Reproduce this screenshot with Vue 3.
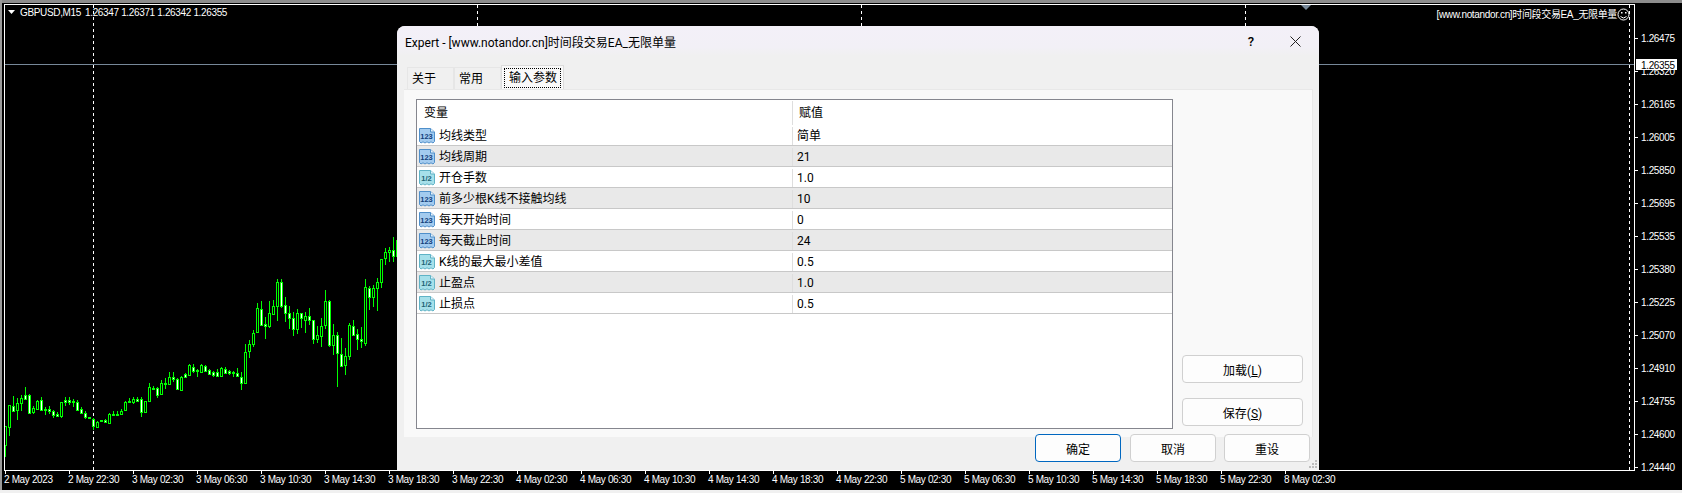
<template>
  <div class="terminal">
    <svg class="chart" width="1682" height="493" viewBox="0 0 1682 493">
      <rect x="0" y="0" width="1682" height="3" fill="#8c8c8c" />
      <rect x="0" y="0" width="2" height="493" fill="#9a9a9a" />
      <rect x="0" y="490" width="1682" height="3" fill="#f0f0f0" />

      <g shape-rendering="crispEdges">
        <line v-for="x in sessions" :key="x" :x1="x + 0.5" y1="5" :x2="x + 0.5" y2="470" stroke="#fff" stroke-dasharray="3 3" />
        <line x1="5" y1="64.5" x2="1634" y2="64.5" stroke="#778899" />

        <g v-for="c in candles" :key="c.x">
          <line :x1="c.x + 0.5" :y1="c.high" :x2="c.x + 0.5" :y2="c.low" stroke="#00ff00" />
          <rect :x="c.x - 0.5" :y="c.top + 0.5" width="2" :height="c.height" stroke="#00ff00" :fill="c.white ? '#fff' : '#000'" />
        </g>

        <line x1="4.5" y1="4" x2="4.5" y2="471" stroke="#fff" />
        <line x1="4" y1="4.5" x2="1635" y2="4.5" stroke="#fff" />
        <line x1="4" y1="470.5" x2="1635" y2="470.5" stroke="#fff" />
        <line x1="1634.5" y1="4" x2="1634.5" y2="471" stroke="#fff" />

        <line v-for="p in prices" :key="p.label" x1="1635" :y1="p.y + 0.5" x2="1638" :y2="p.y + 0.5" stroke="#fff" />
        <line v-for="d in dates" :key="d.x" :x1="d.x + 0.5" y1="471" :x2="d.x + 0.5" y2="474" stroke="#fff" />
      </g>

      <polygon points="8,10 15,10 11.5,14" fill="#fff" />
      <polygon points="1301,5 1311,5 1306,10" fill="#778899" />

      <text class="axis" x="20" y="16">GBPUSD,M15</text>
      <text class="axis" x="85" y="16">1.26347 1.26371 1.26342 1.26355</text>
      <text class="axis" x="1617" y="18" text-anchor="end">[www.notandor.cn]时间段交易EA_无限单量</text>
      <g fill="none" stroke="#fff">
        <circle cx="1623.5" cy="14.5" r="5.5" />
        <path d="M1620.5 16.5q3 3 6 0" />
      </g>
      <rect x="1621" y="12" width="1.5" height="1.5" fill="#fff" />
      <rect x="1625" y="12" width="1.5" height="1.5" fill="#fff" />

      <text v-for="p in prices" :key="p.label" class="axis" x="1641" :y="p.y + 4">{{ p.label }}</text>
      <rect x="1636" y="59" width="41" height="11" fill="#fff" />
      <text class="axis current" x="1641" y="69">1.26355</text>

      <text v-for="d in dates" :key="d.label" class="axis" :x="d.x - 1" y="483">{{ d.label }}</text>
    </svg>

    <div class="dialog">
      <div class="titlebar">
        <span class="title">Expert - [www.notandor.cn]时间段交易EA_无限单量</span>
        <span class="help">?</span>
        <svg class="close" width="11" height="11" viewBox="0 0 11 11">
          <path d="M0.5 0.5L10.5 10.5M10.5 0.5L0.5 10.5" stroke="#222" fill="none" />
        </svg>
      </div>

      <div class="tabs">
        <div class="tab">关于</div>
        <div class="tab">常用</div>
        <div class="tab active"><span class="focus">输入参数</span></div>
      </div>

      <div class="panel">
        <div class="grid">
          <div class="row head">
            <div class="name">变量</div>
            <div class="value">赋值</div>
          </div>
          <div v-for="(row, i) in rows" :key="row.name" class="row item" :class="{ odd: i % 2 === 1 }">
            <div class="name">
              <svg class="type-icon" width="16" height="16" viewBox="0 0 16 16">
                <path
                  d="M0.5 0.5H11.5L15.5 4V13.5L14 15L12 13.8L10 15L8 13.8L6 15L4 13.8L2 15L0.5 13.5Z"
                  :fill="row.dbl ? '#a6e0ea' : '#a3cbef'"
                  :stroke="row.dbl ? '#5fb3c6' : '#4f8fca'"
                />
                <path d="M11.5 0.5V4H15.5" fill="#e6f3fb" :stroke="row.dbl ? '#5fb3c6' : '#4f8fca'" />
                <text class="type-text" x="7.5" y="11" text-anchor="middle" :fill="row.dbl ? '#1d6275' : '#123f7c'">{{ row.dbl ? '1/2' : '123' }}</text>
              </svg>
              <span>{{ row.name }}</span>
            </div>
            <div class="value">{{ row.value }}</div>
          </div>
        </div>

        <div class="side">
          <button class="btn side-btn">加载(<u>L</u>)</button>
          <button class="btn side-btn">保存(<u>S</u>)</button>
        </div>
      </div>

      <div class="footer">
        <button class="btn foot-btn primary">确定</button>
        <button class="btn foot-btn">取消</button>
        <button class="btn foot-btn">重设</button>
      </div>
      <svg class="grip" width="9" height="9" viewBox="0 0 9 9">
        <g fill="#bdbdbd">
          <rect x="6" y="0" width="2" height="2" />
          <rect x="3" y="3" width="2" height="2" />
          <rect x="6" y="3" width="2" height="2" />
          <rect x="0" y="6" width="2" height="2" />
          <rect x="3" y="6" width="2" height="2" />
          <rect x="6" y="6" width="2" height="2" />
        </g>
      </svg>
    </div>
  </div>
</template>

<script setup>
// candle rows: high, low, body top, body bottom, white body
// numbers were read off 3x crops, so each part has its own base y
const partA = [
  [257, 352, 257, 315, 0], [195, 287, 195, 260, 0], [168, 212, 198, 212, 1], [175, 240, 190, 212, 0],
  [165, 212, 175, 190, 0], [141, 180, 165, 177, 1], [163, 222, 165, 218, 1], [197, 222, 205, 218, 0],
  [180, 210, 183, 207, 0], [172, 212, 181, 212, 1], [200, 226, 208, 210, 1], [197, 222, 207, 214, 1],
  [210, 234, 212, 224, 1], [215, 232, 222, 228, 1], [185, 234, 187, 228, 0], [170, 198, 181, 187, 1],
  [172, 196, 181, 187, 1], [177, 200, 183, 187, 1], [181, 212, 186, 210, 1], [200, 222, 207, 220, 1],
  [214, 236, 220, 232, 1], [232, 233, 232, 233, 1], [235, 270, 238, 260, 1], [243, 261, 245, 260, 0],
  [241, 243, 241, 243, 1], [238, 250, 241, 248, 1], [220, 252, 222, 248, 0], [212, 225, 222, 223, 1],
  [212, 226, 221, 222, 1], [208, 222, 212, 221, 0], [182, 214, 187, 212, 0], [174, 190, 183, 187, 1],
  [172, 192, 178, 188, 0], [172, 187, 176, 183, 1], [170, 232, 178, 218, 1], [182, 218, 184, 217, 0],
  [130, 186, 142, 184, 0], [138, 150, 143, 146, 1], [142, 175, 145, 165, 1], [120, 166, 130, 163, 0],
  [115, 146, 130, 133, 1], [97, 136, 112, 134, 0], [97, 125, 112, 118, 1], [113, 150, 118, 149, 1],
  [108, 150, 110, 149, 0], [98, 112, 102, 110, 1], [72, 106, 75, 104, 0], [72, 100, 80, 92, 1],
  [88, 110, 91, 94, 1], [72, 98, 75, 95, 0], [75, 95, 77, 92, 1], [86, 106, 91, 104, 1],
  [92, 110, 97, 105, 1], [87, 112, 97, 110, 1], [80, 112, 85, 110, 0], [80, 102, 86, 98, 1],
  [90, 105, 94, 100, 1], [92, 112, 97, 100, 1], [85, 112, 100, 108, 1], [95, 150, 110, 128, 1],
  [12, 128, 35, 128, 0],
]
const partB = [
  [390, 444, 403, 425, 0], [360, 411, 370, 404, 0], [280, 368, 295, 368, 0], [273, 345, 298, 345, 1],
  [320, 386, 343, 350, 1], [273, 353, 310, 350, 0], [270, 315, 289, 312, 0], [208, 333, 217, 290, 0],
  [207, 293, 217, 288, 1], [262, 335, 286, 311, 1], [288, 357, 310, 326, 1], [305, 378, 325, 357, 1],
  [297, 372, 310, 357, 0], [308, 355, 310, 326, 1], [307, 368, 319, 330, 0], [295, 345, 319, 332, 1],
  [330, 402, 331, 389, 1], [348, 398, 376, 389, 0], [325, 410, 347, 376, 0], [240, 358, 274, 347, 0],
  [270, 410, 274, 406, 1], [343, 435, 376, 407, 0], [366, 531, 376, 431, 1], [385, 468, 431, 467, 1],
  [415, 495, 438, 464, 0], [340, 450, 346, 440, 0], [330, 378, 349, 375, 1], [358, 420, 373, 389, 1],
  [350, 413, 388, 395, 1], [207, 407, 232, 401, 0], [228, 300, 234, 261, 1], [225, 290, 234, 261, 0],
  [205, 303, 217, 236, 0],
]
const partC = [
  [102, 190, 102, 172, 0], [70, 120, 82, 100, 0], [67, 112, 76, 83, 0], [37, 112, 76, 95, 1], [45, 92, 45, 92, 0],
]

const toCandles = (part, base) => part.map(([high, low, top, bottom, white]) => ({
  high: Math.round(base + high / 3),
  low: Math.round(base + low / 3),
  top: Math.round(base + top / 3),
  height: Math.max(1, Math.round((bottom - top) / 3)),
  white,
}))

const candles = [
  ...toCandles(partA, 340),
  ...toCandles(partB, 210),
  ...toCandles(partC, 225),
].map((c, i) => ({ ...c, x: 5 + 4 * i }))

const sessions = [93, 477, 861, 1245, 1629]

const prices = [
  '1.26475', '1.26320', '1.26165', '1.26005', '1.25850', '1.25695', '1.25535',
  '1.25380', '1.25225', '1.25070', '1.24910', '1.24755', '1.24600', '1.24440',
].map((label, i) => ({ label, y: 38 + 33 * i }))

const dates = [
  '2 May 2023', '2 May 22:30', '3 May 02:30', '3 May 06:30', '3 May 10:30', '3 May 14:30', '3 May 18:30',
  '3 May 22:30', '4 May 02:30', '4 May 06:30', '4 May 10:30', '4 May 14:30', '4 May 18:30', '4 May 22:30',
  '5 May 02:30', '5 May 06:30', '5 May 10:30', '5 May 14:30', '5 May 18:30', '5 May 22:30', '8 May 02:30',
].map((label, i) => ({ label, x: 5 + 64 * i }))

const rows = [
  { name: '均线类型', value: '简单', dbl: false },
  { name: '均线周期', value: '21', dbl: false },
  { name: '开仓手数', value: '1.0', dbl: true },
  { name: '前多少根K线不接触均线', value: '10', dbl: false },
  { name: '每天开始时间', value: '0', dbl: false },
  { name: '每天截止时间', value: '24', dbl: false },
  { name: 'K线的最大最小差值', value: '0.5', dbl: true },
  { name: '止盈点', value: '1.0', dbl: true },
  { name: '止损点', value: '0.5', dbl: true },
]
</script>

<style scoped>
.terminal {
  position: relative;
  width: 1682px;
  height: 493px;
  background: #000;
  overflow: hidden;
  font-family: Roboto, "Noto Sans CJK SC", sans-serif;
  font-size: 12px;
  color: #000;
}

.chart {
  display: block;
}

.axis {
  font-family: "Liberation Sans", "Noto Sans CJK SC", sans-serif;
  font-size: 10px;
  letter-spacing: -0.35px;
  fill: #fff;
}

.axis.current {
  fill: #000;
}

.dialog {
  position: absolute;
  left: 397px;
  top: 26px;
  width: 922px;
  height: 444px;
  display: flex;
  flex-direction: column;
  background: #f0f0f0;
  border-radius: 8px 8px 0 0;
}

.titlebar {
  height: 30px;
  flex: none;
  display: flex;
  align-items: center;
  padding: 0 18px 0 8px;
  background: linear-gradient(#f3f0f8, #f2f0f6 70%, #f0f0f0);
  border-radius: 8px 8px 0 0;
}

.title {
  flex: 1;
}

.help {
  margin-right: 36px;
  font-size: 13px;
  font-weight: 500;
}

.tabs {
  height: 33px;
  flex: none;
  display: flex;
  align-items: flex-end;
  padding-left: 10px;
}

.tab {
  height: 22px;
  width: 47px;
  box-sizing: border-box;
  padding: 3px 0 0 4px;
  border: 1px solid #e6e6e6;
  border-bottom: none;
  line-height: 17px;
}

.tab.active {
  width: 63px;
  height: 24px;
  padding: 2px;
  background: #f9f9f9;
  border-color: #dcdcdc;
}

.focus {
  display: block;
  height: 20px;
  line-height: 18px;
  padding-left: 4px;
  box-sizing: border-box;
  border: 1px dotted #000;
}

.panel {
  height: 348px;
  flex: none;
  box-sizing: border-box;
  margin: 0 6px 0 7px;
  padding: 9px 9px 8px 12px;
  display: flex;
  background: #f9f9f9;
  border: 1px solid #e8e8e8;
  border-bottom: none;
  border-left: none;
}

.grid {
  width: 757px;
  box-sizing: border-box;
  border: 1px solid #85868e;
  background: #fff;
}

.row {
  display: grid;
  grid-template-columns: 375px 1fr;
}

.head {
  height: 25px;
  padding-top: 1px;
  box-sizing: border-box;
  line-height: 24px;
}

.head .name {
  padding-left: 7px;
}

.head .value {
  padding-left: 6px;
}

.item {
  height: 21px;
  box-sizing: border-box;
  padding-top: 2px;
  line-height: 18px;
  border-bottom: 1px solid #c8c8c8;
}

.item.odd {
  background: #e9e9e9;
}

.name {
  display: flex;
  align-items: center;
}

.value {
  padding-left: 4px;
  border-left: 1px solid #dedede;
}

.type-icon {
  flex: none;
  margin: -1px 4px 0 2px;
}

.type-text {
  font-family: "Liberation Sans", sans-serif;
  font-size: 7.5px;
  font-weight: 700;
}

.side {
  flex: 1;
  display: flex;
  flex-direction: column;
  justify-content: flex-end;
  align-items: flex-end;
  gap: 15px;
  padding-bottom: 3px;
}

.btn {
  box-sizing: border-box;
  padding: 0;
  font: inherit;
  color: #000;
  background: #fdfdfd;
  border: 1px solid #d0d0d0;
  border-radius: 4px;
}

.side-btn {
  width: 121px;
  height: 28px;
}

.footer {
  flex: 1;
  display: flex;
  justify-content: flex-end;
  align-items: flex-start;
  gap: 8px;
  padding: 0 9px 0 0;
  margin-top: -3px;
}

.foot-btn {
  width: 86px;
  height: 28px;
}

.foot-btn.primary {
  margin-right: 1px;
  border: 1.5px solid #0067c0;
}

.grip {
  position: absolute;
  right: 1px;
  bottom: 1px;
}
</style>

<style>
html, body {
  overflow: hidden;
  background: #000;
}
</style>
